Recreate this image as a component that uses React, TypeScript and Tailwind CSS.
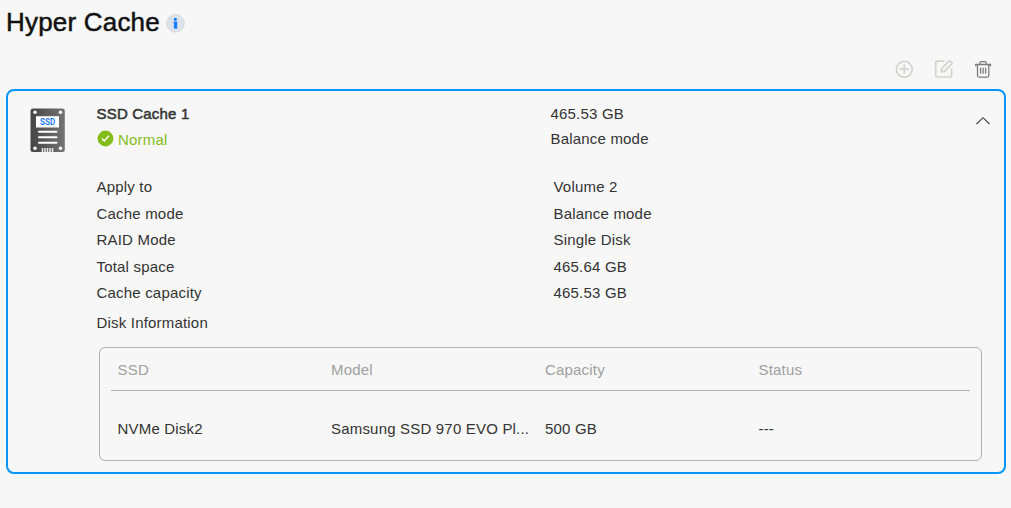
import React from "react";

const details: [string, string, string][] = [
  ["Apply to", "Volume 2", "h-[27px]"],
  ["Cache mode", "Balance mode", "h-[26px]"],
  ["RAID Mode", "Single Disk", "h-[27px]"],
  ["Total space", "465.64 GB", "h-[26px]"],
  ["Cache capacity", "465.53 GB", "h-[30px]"],
];

const disks = [["NVMe Disk2", "Samsung SSD 970 EVO Pl...", "500 GB", "---"]];

function InfoIcon() {
  return (
    <svg width="20" height="20" viewBox="0 0 20 20">
      <circle cx="10.4" cy="10.3" r="9" fill="#dde2e8" stroke="#cfd4da" strokeWidth="0.6" />
      <circle cx="10.4" cy="6.3" r="1.6" fill="#0f7bff" />
      <path d="M8.7 8.8h3.3v6.6H9.1v-5.300h-.400z" fill="#0f7bff" stroke="#0f7bff" strokeWidth="0.3" />
    </svg>
  );
}

function AddIcon() {
  return (
    <svg width="20" height="20" viewBox="0 0 20 20" fill="none" stroke="#d3d3cf" strokeWidth="1.7" strokeLinecap="round">
      <circle cx="10.3" cy="10.2" r="7.9" />
      <path d="M10.3 6.200v8M6.300 10.200h8" />
    </svg>
  );
}

function EditIcon() {
  return (
    <svg width="20" height="20" viewBox="0 0 20 20" fill="none" stroke="#d3d3cf" strokeWidth="1.7" strokeLinecap="round" strokeLinejoin="round">
      <path d="M9.500 2.100H3.200c-.900 0-1.500.600-1.500 1.500v12.900c0 .900.600 1.500 1.500 1.500h12.900c.900 0 1.500-.600 1.500-1.500V10" />
      <path d="M7.200 12.800l.300-3.200 7.400-7.400c.400-.400.900-.400 1.300 0l1.500 1.500c.400.400.400.900 0 1.300l-7.300 7.400z" />
    </svg>
  );
}

function TrashIcon() {
  return (
    <svg width="18" height="18" viewBox="0 0 18 18" fill="none" stroke="#7c7c7c" strokeWidth="1.300" strokeLinecap="round" strokeLinejoin="round">
      <path d="M1.800 4.500h14.700M6 4.300V2.600c0-.500.400-.900.900-.900h4.400c.500 0 .900.400.900.900v1.700" />
      <path d="M1.800 4.500v1.300M16.500 4.500v1.300M3.500 4.800v10.800c0 .900.600 1.500 1.500 1.500h8.300c.900 0 1.500-.600 1.500-1.500V4.800" />
      <path d="M6.600 8.200v5M9.100 8.200v5M11.600 8.200v5" />
    </svg>
  );
}

function SsdIcon() {
  return (
    <svg width="36" height="45" viewBox="0 0 36 45">
      <defs>
        <linearGradient id="ssd-body" x1="0" y1="0" x2="1" y2="0">
          <stop offset="0" stopColor="#454545" />
          <stop offset="1" stopColor="#747474" />
        </linearGradient>
      </defs>
      <rect x="0.500" y="0.500" width="34.300" height="43.500" rx="2.500" fill="url(#ssd-body)" />
      <g fill="#fff">
        <circle cx="5" cy="4.300" r="1.700" />
        <circle cx="30.500" cy="4.300" r="1.700" />
        <circle cx="5" cy="40.300" r="1.700" />
        <circle cx="30.500" cy="40.300" r="1.700" />
        <rect x="6" y="8.200" width="23" height="11.300" />
      </g>
      <path d="M9 23.700h17.500M9 29.200h17.500M9 34.700h17.500" stroke="#fff" strokeWidth="2" strokeLinecap="round" />
      <path d="M12.500 40v4M15 40v4M17.500 40v4M20 40v4M22.500 40v4" stroke="#eee" strokeWidth="1.500" />
      <text x="17.600" y="16.800" textAnchor="middle" fontFamily="Roboto, sans-serif" fontSize="8.300" fontWeight="700" textLength="15" lengthAdjust="spacingAndGlyphs" letterSpacing="0" fill="#1b7df5">SSD</text>
    </svg>
  );
}

function CheckIcon() {
  return (
    <svg width="17" height="17" viewBox="0 0 17 17">
      <circle cx="8.500" cy="8.500" r="7.900" fill="#84bd19" />
      <path d="M4.900 8.600l2.400 2.400 4.500-5.200" fill="none" stroke="#fff" strokeWidth="1.400" />
    </svg>
  );
}

export default function App() {
  return (
    <main className="flex h-[508px] w-[1011px] flex-col bg-[#f7f7f7] font-['Liberation_Sans',Arial,sans-serif] text-[15px] leading-5 tracking-[0.19px] text-[#333]">
      <header className="flex h-[50px] items-start pl-1.5 pt-[5px]">
        <h1 className="w-[159px] whitespace-nowrap text-[26px] leading-[34px] tracking-[0.2px] text-[#111] [-webkit-text-stroke:0.5px_#111]">Hyper Cache</h1>
        <span className="mt-2"><InfoIcon /></span>
      </header>
      <nav className="flex h-[39px] items-center justify-end gap-5 pb-0.5 pr-[19px]">
        <button aria-label="Add"><AddIcon /></button>
        <button aria-label="Edit"><EditIcon /></button>
        <button aria-label="Delete"><TrashIcon /></button>
      </nav>
      <section className="ml-1.5 h-[385px] w-[1000px] rounded-lg border-2 border-[#0795f7] pl-[21.5px] pt-[13px]">
        <div className="flex h-[73px]">
          <div className="w-[67px] pt-1"><SsdIcon /></div>
          <div className="w-[454px]">
            <h2 className="[-webkit-text-stroke:0.5px_#333]">SSD Cache 1</h2>
            <div className="mt-1.5 flex gap-1 pl-[0.5px] text-[#84bd19]">
              <CheckIcon />
              <span>Normal</span>
            </div>
          </div>
          <div className="w-[424.500px]">
            <p>465.53 GB</p>
            <p className="mt-[5px]">Balance mode</p>
          </div>
          <button aria-label="Collapse" className="mt-[9px] h-4">
            <svg width="16" height="16" viewBox="0 0 16 16" fill="none" stroke="#443f55" strokeWidth="1.100">
              <path d="M1.500 11L8 4.700l6.500 6.300" />
            </svg>
          </button>
        </div>
        <div className="ml-[67px]">
          {details.map(([label, value, height]) => (
            <div key={label} className={`flex ${height}`}>
              <span className="w-[457px]">{label}</span>
              <span>{value}</span>
            </div>
          ))}
          <p>Disk Information</p>
        </div>
        <div className="ml-[69.5px] mt-[14px] h-[114px] w-[883px] rounded-md border border-[#b0b0b0] px-[11px]">
          <div className="grid h-[43px] grid-cols-[213.500px_214px_213.500px_1fr] border-b border-[#b0b0b0] pl-[6.5px] pt-3 text-[#a0a0a0]">
            <span>SSD</span>
            <span>Model</span>
            <span>Capacity</span>
            <span>Status</span>
          </div>
          {disks.map((row) => (
            <div key={row[0]} className="grid h-[70px] grid-cols-[213.500px_214px_213.500px_1fr] pl-[6.5px] pt-7">
              {row.map((cell) => (
                <span key={cell} className="whitespace-nowrap">{cell}</span>
              ))}
            </div>
          ))}
        </div>
      </section>
    </main>
  );
}
